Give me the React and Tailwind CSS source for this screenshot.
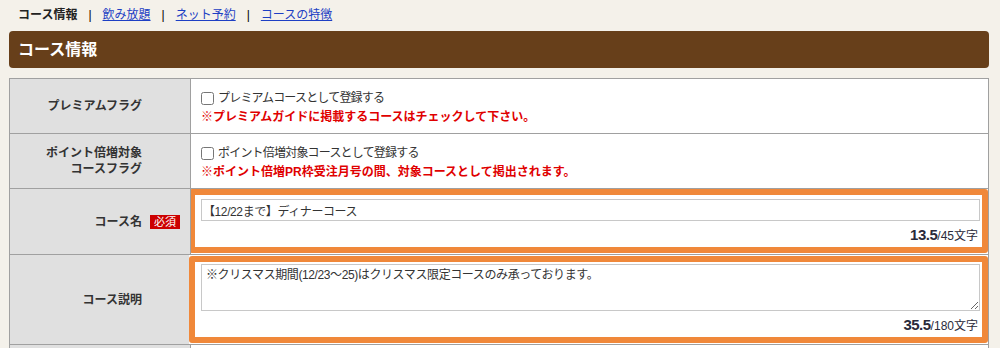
import { useState } from "react";

const font = { fontFamily: '"Liberation Sans", "Noto Sans CJK JP", sans-serif' };

function Counter({ value, max }) {
  return (
    <div className="flex items-baseline justify-end pr-[2px] text-[#2a2a3a]">
      <span className="text-[15px] font-bold leading-none tracking-[-0.5px]">{value}</span>
      <span className="text-[12px] leading-none">/{max}文字</span>
    </div>
  );
}

export default function App() {
  const [name, setName] = useState("【12/22まで】ディナーコース");
  const [desc, setDesc] = useState("※クリスマス期間(12/23～25)はクリスマス限定コースのみ承っております。");

  return (
    <div className="w-[1000px] h-[348px] overflow-hidden bg-[#f4f1ea] text-[#333]" style={font}>
      {/* tabs */}
      <div className="h-[27px] pl-[18px] pt-[2px] flex items-center text-[12px] leading-none">
        <span className="font-bold text-[#222]">コース情報</span>
        <span className="mx-[11px] text-black">|</span>
        <a href="#" className="text-[#1d3fc4] underline">飲み放題</a>
        <span className="mx-[11px] text-black">|</span>
        <a href="#" className="text-[#1d3fc4] underline">ネット予約</a>
        <span className="mx-[11px] text-black">|</span>
        <a href="#" className="text-[#1d3fc4] underline">コースの特徴</a>
      </div>

      {/* header */}
      <div className="mt-[4px] ml-[9px] w-[980px] h-[37px] bg-[#673f1a] rounded-[4px] flex items-center pl-[9px]">
        <h2 className="text-white font-bold text-[16px]">コース情報</h2>
      </div>

      {/* table */}
      <div className="mt-[10px] ml-[9px] w-[980px] border border-[#a0a0a0] text-[12px]">
        {/* premium */}
        <div className="grid grid-cols-[181px_1fr] h-[55px] border-b border-[#a0a0a0]">
          <div className="bg-[#e0e0e0] border-r border-[#a0a0a0] flex items-center justify-end pr-[48px] font-bold">
            プレミアムフラグ
          </div>
          <div className="bg-white pl-[10px] pt-[11px]">
            <label className="flex items-center gap-[4px] h-[16px] tracking-[-0.8px]">
              <input type="checkbox" className="m-0 w-[13px] h-[13px]" />
              プレミアムコースとして登録する
            </label>
            <p className="mt-[3px] text-[#e00000] font-bold leading-[16px]">
              ※プレミアムガイドに掲載するコースはチェックして下さい。
            </p>
          </div>
        </div>

        {/* point */}
        <div className="grid grid-cols-[181px_1fr] h-[55px] border-b border-[#a0a0a0]">
          <div className="bg-[#e0e0e0] border-r border-[#a0a0a0] flex items-center justify-end pr-[48px] font-bold text-right leading-[16px]">
            <div>
              ポイント倍増対象
              <br />
              コースフラグ
            </div>
          </div>
          <div className="bg-white pl-[10px] pt-[11px]">
            <label className="flex items-center gap-[4px] h-[16px] tracking-[-0.8px]">
              <input type="checkbox" className="m-0 w-[13px] h-[13px]" />
              ポイント倍増対象コースとして登録する
            </label>
            <p className="mt-[3px] text-[#e00000] font-bold leading-[16px]">
              ※ポイント倍増PR枠受注月号の間、対象コースとして掲出されます。
            </p>
          </div>
        </div>

        {/* course name */}
        <div className="grid grid-cols-[181px_1fr] h-[66px] border-b border-[#a0a0a0]">
          <div className="relative bg-[#e0e0e0] border-r border-[#a0a0a0] flex items-center justify-end pr-[48px] font-bold">
            コース名
            <span className="absolute right-[10px] top-[26px] w-[30px] h-[14px] bg-[#cc0000] text-white text-[11px] font-normal leading-[14px] text-center">
              必須
            </span>
          </div>
          <div className="bg-white pb-[1px] -ml-[2px]">
            <div className="h-full border-[6px] border-[#f0883a] rounded-[3px] pl-[6px] pr-[2px] pt-[4px] flex flex-col">
              <input
                value={name}
                onChange={(e) => setName(e.target.value)}
                className="h-[22px] w-full border border-[#c8c8c8] px-[1px] text-[12px] tracking-[-0.4px] outline-none"
              />
              <div className="flex-1 flex items-center justify-end">
                <Counter value="13.5" max="45" />
              </div>
            </div>
          </div>
        </div>

        {/* course desc */}
        <div className="grid grid-cols-[181px_1fr] h-[90px] border-b border-[#a0a0a0]">
          <div className="bg-[#e0e0e0] border-r border-[#a0a0a0] flex items-center justify-end pr-[48px] font-bold">
            コース説明
          </div>
          <div className="bg-white pt-[1px] pb-[1px] -ml-[2px]">
            <div className="h-full border-[6px] border-[#f0883a] rounded-[3px] pl-[6px] pr-[2px] pt-[2px] flex flex-col">
              <textarea
                value={desc}
                onChange={(e) => setDesc(e.target.value)}
                className="h-[47px] w-full border border-[#c8c8c8] px-[4px] py-[2px] text-[12px] leading-[16px] tracking-[-0.4px] outline-none"
              />
              <div className="flex-1 flex items-center justify-end">
                <Counter value="35.5" max="180" />
              </div>
            </div>
          </div>
        </div>
        <div className="grid grid-cols-[181px_1fr] h-[20px]">
          <div className="bg-[#e0e0e0] border-r border-[#a0a0a0]" />
          <div className="bg-white" />
        </div>
      </div>
    </div>
  );
}
